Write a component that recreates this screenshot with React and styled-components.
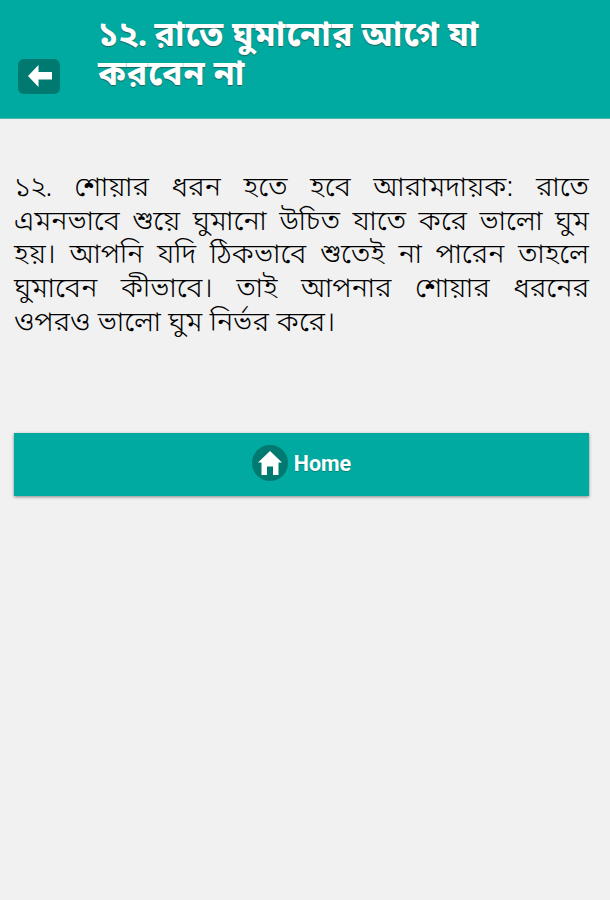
import React from 'react'
import styled, { createGlobalStyle } from 'styled-components'

function App() {
    return (
        <PageStyled>
            <GlobalStyle />
            <Header>
                <BackButton aria-label="Back">
                    <svg width="24" height="22" viewBox="0 0 24 22">
                        <path d="M0 11 10.5 0V7H24V14.5H10.5V22Z" fill="#fff" />
                    </svg>
                </BackButton>
                <Title><Num>১২.</Num> রাতে ঘুমানোর আগে যা করবেন না</Title>
            </Header>
            <Article>
                <Num>১২.</Num> শোয়ার ধরন হতে হবে আরামদায়ক: রাতে এমনভাবে শুয়ে ঘুমানো
                উচিত যাতে করে ভালো ঘুম হয়। আপনি যদি ঠিকভাবে শুতেই না পারেন তাহলে
                ঘুমাবেন কীভাবে। তাই আপনার শোয়ার ধরনের ওপরও ভালো ঘুম নির্ভর করে।
            </Article>
            <HomeButton>
                <HomeIcon>
                    <svg width="24" height="24" viewBox="0 0 24 24">
                        <path d="M12 0 24 11.5H20.5V24H15V15.5H9V24H3.5V11.5H0Z" fill="#fff" />
                    </svg>
                </HomeIcon>
                Home
            </HomeButton>
        </PageStyled>
    )
}

const GlobalStyle = createGlobalStyle`
  body {
    margin: 0;
    background: #f1f1f1;
  }
`

const PageStyled = styled.div`
  min-height: 100vh;
  background: #f1f1f1;
  color: #000;
  font-family: 'Noto Sans', 'Noto Sans Bengali', sans-serif;
`

const Header = styled.header`
  display: flex;
  align-items: flex-start;
  box-sizing: border-box;
  height: 119px;
  padding: 14px 18px 0;
  background: #00aaa0;
  border-bottom: 1px solid #4eb5ad;
`

const BackButton = styled.button`
  display: flex;
  align-items: center;
  justify-content: center;
  flex: none;
  width: 42px;
  height: 35px;
  margin: 45px 38px 0 0;
  padding: 0 0 2px 1px;
  border: none;
  border-radius: 6px;
  background: #007a70;
`

const Num = styled.span`
  letter-spacing: -0.8px;
`

const Title = styled.h1`
  width: 414px;
  margin: 0;
  color: #fff;
  font-size: 34px;
  line-height: 39px;
  font-weight: 700;
  letter-spacing: 1.1px;
  word-spacing: -2px;
  text-shadow: 0 1px 1px rgba(60, 50, 40, 0.6);
`

const Article = styled.p`
  margin: 0;
  padding: 50px 21px 0 14px;
  font-size: 28px;
  font-weight: 300;
  line-height: 33.7px;
  letter-spacing: 0.15px;
  text-align: justify;
`

const HomeButton = styled.button`
  display: flex;
  align-items: center;
  justify-content: center;
  gap: 6px;
  width: 575px;
  height: 63px;
  margin: 95px 0 0 14px;
  padding: 0 0 2px;
  border: none;
  background: #00aaa0;
  box-shadow: 0 1px 3px rgba(0, 0, 0, 0.45);
  color: #fff;
  font: 700 21.4px Roboto, sans-serif;
  text-shadow: 0 1px 1px rgba(0, 0, 0, 0.25);
`

const HomeIcon = styled.span`
  display: flex;
  align-items: center;
  justify-content: center;
  width: 36px;
  height: 36px;
  border-radius: 50%;
  background: #007a70;
`

export default App
